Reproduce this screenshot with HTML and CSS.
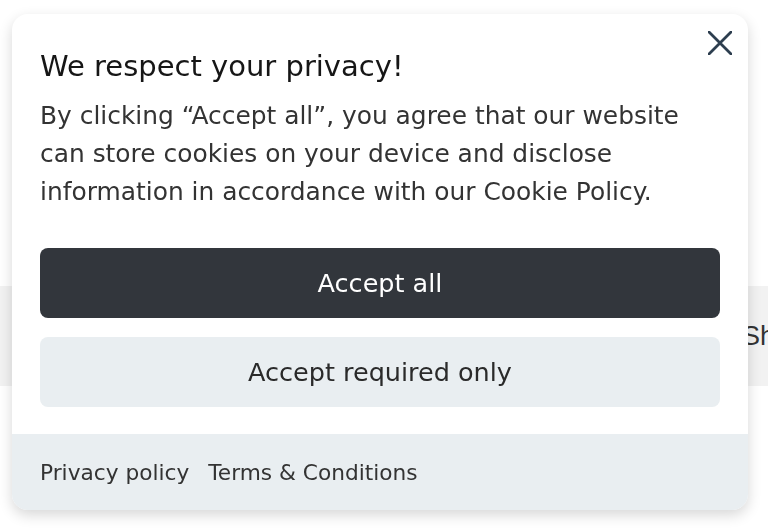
FILE: index.html
```html
<!DOCTYPE html>
<html lang="en">
<head>
    <meta charset="UTF-8">
    <meta name="viewport" content="width=device-width, initial-scale=1.0">
    <title>Cookie consent</title>
    <link rel="stylesheet" href="styles.css">
</head>
<body>
    <div class="page">
        <div class="band">
            <span class="band-text">Sh</span>
        </div>
    </div>

    <div class="cookie-card">
        <button class="close-btn" type="button" aria-label="Close">
            <svg width="24" height="24" viewBox="0 0 24 24">
                <path d="M1 1 L23 23 M23 1 L1 23" stroke="#2d3e4f" stroke-width="2.8" stroke-linecap="round" fill="none"/>
            </svg>
        </button>
        <div class="cookie-body">
            <h2 class="cookie-title">We respect your privacy!</h2>
            <p class="cookie-text">By clicking “Accept all”, you agree that our website can store cookies on your device and disclose information in accordance with our Cookie Policy.</p>
            <div class="cookie-actions">
                <button class="btn btn-dark" type="button">Accept all</button>
                <button class="btn btn-light" type="button">Accept required only</button>
            </div>
        </div>
        <div class="cookie-footer">
            <a href="#">Privacy policy</a>
            <a href="#">Terms &amp; Conditions</a>
        </div>
    </div>
</body>
</html>
```

FILE: styles.css
```css
body {
    font-family: "DejaVu Sans", "Noto Sans", sans-serif;
    margin: 0;
    padding: 0;
    background-color: #ffffff;
    color: #222;
}

.page {
    padding-top: 286px;
}

.band {
    height: 100px;
    background-color: #f2f2f2;
    display: flex;
    align-items: center;
    overflow: hidden;
}

.band-text {
    margin-left: 742px;
    font-family: "Liberation Sans", Arial, sans-serif;
    font-size: 27px;
    color: #333;
    white-space: nowrap;
}

.cookie-card {
    position: fixed;
    left: 12px;
    top: 14px;
    width: 736px;
    background-color: #ffffff;
    border-radius: 16px;
    overflow: hidden;
    box-shadow: 0 5px 14px rgba(0, 0, 0, 0.16);
}

.close-btn {
    position: absolute;
    top: 10px;
    right: 9px;
    width: 38px;
    height: 38px;
    padding: 0;
    border: none;
    background: none;
    display: flex;
    align-items: center;
    justify-content: center;
    cursor: pointer;
}

.cookie-body {
    padding: 34px 28px 27px;
}

.cookie-title {
    margin: 0 0 13px;
    font-size: 29px;
    font-weight: normal;
    line-height: 36px;
    color: #161616;
}

.cookie-text {
    margin: 0;
    font-size: 24.9px;
    line-height: 38px;
    color: #333;
}

.cookie-actions {
    margin-top: 37px;
    display: flex;
    flex-direction: column;
    gap: 19px;
}

.btn {
    display: block;
    width: 100%;
    height: 70px;
    padding-bottom: 2px;
    border: none;
    border-radius: 8px;
    font-family: inherit;
    font-size: 25.5px;
    cursor: pointer;
}

.btn-dark {
    background-color: #32363c;
    color: #ffffff;
}

.btn-light {
    background-color: #e9eef1;
    color: #2a2a2a;
}

.cookie-footer {
    background-color: #e9eef1;
    height: 76px;
    padding: 0 28px;
    display: flex;
    align-items: center;
    gap: 19px;
}

.cookie-footer a {
    font-size: 21.7px;
    color: #333;
    text-decoration: none;
}
```
